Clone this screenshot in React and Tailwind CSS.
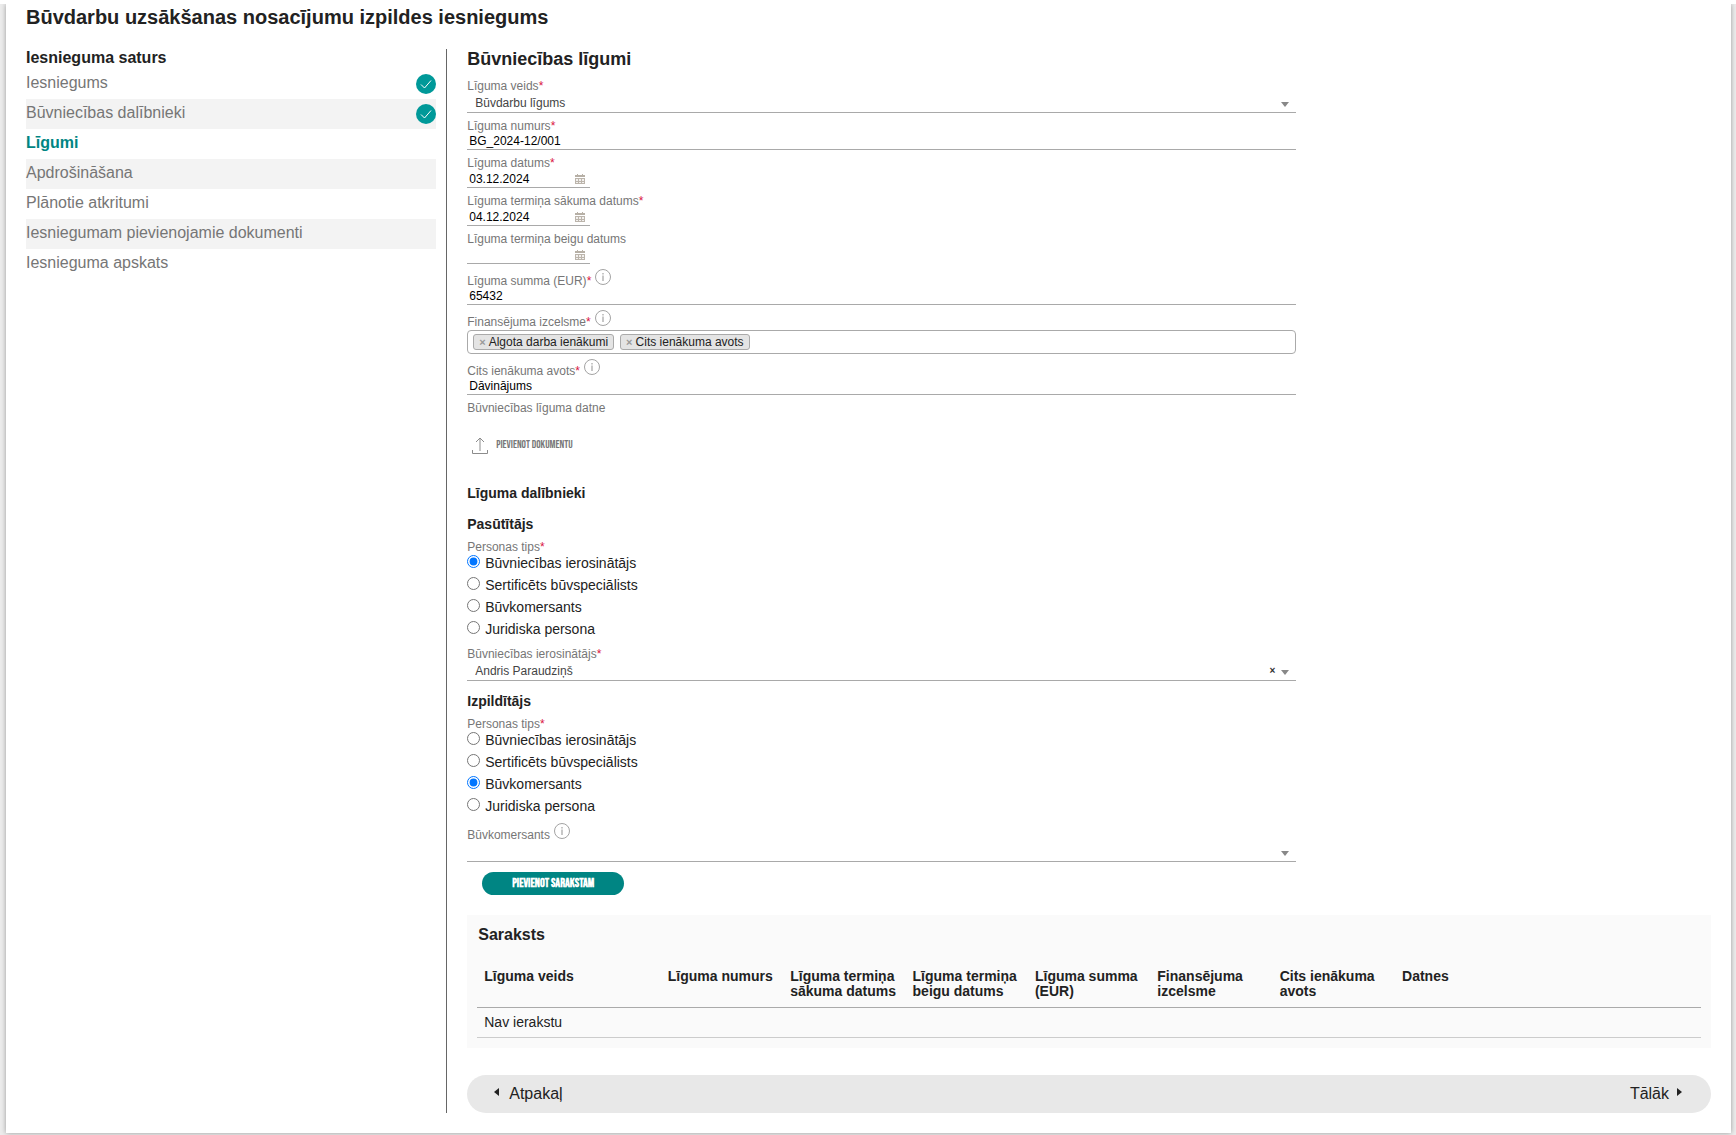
import { useState } from "react";

const steps = [
  { name: "Iesniegums", done: true },
  { name: "Būvniecības dalībnieki", done: true },
  { name: "Līgumi", active: true },
  { name: "Apdrošināšana" },
  { name: "Plānotie atkritumi" },
  { name: "Iesniegumam pievienojamie dokumenti" },
  { name: "Iesnieguma apskats" },
];

const personTypes = [
  "Būvniecības ierosinātājs",
  "Sertificēts būvspeciālists",
  "Būvkomersants",
  "Juridiska persona",
];

const columns = [
  { name: "Līguma veids", width: "w-[15%]" },
  { name: "Līguma numurs", width: "w-[10%]" },
  { name: "Līguma termiņa sākuma datums", width: "w-[10%]" },
  { name: "Līguma termiņa beigu datums", width: "w-[10%]" },
  { name: "Līguma summa (EUR)", width: "w-[10%]" },
  { name: "Finansējuma izcelsme", width: "w-[10%]" },
  { name: "Cits ienākuma avots", width: "w-[10%]" },
  { name: "Datnes", width: "w-[25%]" },
];

const CheckBadge = () => (
  <svg width="20" height="20" viewBox="0 0 20 20" fill="none">
    <circle cx="10" cy="10" r="10" fill="#009999" />
    <path d="M5 10.5 8.5 14 15 6.5" stroke="#fff" strokeWidth="1" />
  </svg>
);

const InfoIcon = () => (
  <svg width="16" height="16" viewBox="0 0 16 16" fill="none">
    <circle cx="8" cy="8" r="7.5" stroke="#a3a3a3" />
    <path d="M8 4v1.5M8 6.5V12" stroke="#b0b0b0" strokeWidth="1.4" />
  </svg>
);

const CalendarIcon = () => (
  <svg width="10" height="10" viewBox="0 0 10 10" fill="#a59c90">
    <path d="M2 0h1v1h4V0h1v1h2v2H0V1h2z" opacity=".8" />
    <path d="M0 4h10v6H0z" opacity=".75" />
    <path
      d="M1 5h2v2H1zM4 5h2v2H4zM7 5h2v2H7zM1 8h2v1H1zM4 8h2v1H4zM7 8h2v1H7z"
      fill="#fff"
      opacity=".8"
    />
  </svg>
);

const UploadIcon = () => (
  <svg width="16" height="17" viewBox="0 0 16 17" fill="none" stroke="#8c8c8c">
    <path d="M8 14V1M4 5l4-4 4 4M.5 13v3.5h15V13" strokeWidth="1" />
  </svg>
);

const Label = ({ id, text, required, hint }) => (
  <div className="flex items-end gap-1 text-xs leading-[14px] text-[#767676]">
    <label htmlFor={id}>
      {text}
      {required && <span className="text-[#d9163f]">*</span>}
    </label>
    {hint && (
      <button type="button" aria-label="Info" className="mb-[3px]">
        <InfoIcon />
      </button>
    )}
  </div>
);

const TextField = ({ id, label, value, hint }) => (
  <div className={hint ? "pt-[5px]" : "pt-[6px]"}>
    <Label id={id} text={label} required hint={hint} />
    <input
      id={id}
      type="text"
      defaultValue={value}
      className="block h-[17px] w-full border-b border-[#a9a9a9] px-[2px] text-xs text-black outline-none"
    />
  </div>
);

const DateField = ({ id, label, value, required }) => (
  <div className="pt-[6px]">
    <Label id={id} text={label} required={required} />
    <div className="flex h-[18px] w-[123px] items-center border-b border-[#a9a9a9] pr-[5px]">
      <input
        id={id}
        type="text"
        defaultValue={value}
        className="w-full min-w-0 px-[2px] text-xs leading-[14px] text-black outline-none"
      />
      <button type="button" aria-label="Kalendārs">
        <CalendarIcon />
      </button>
    </div>
  </div>
);

const SelectField = ({ id, label, value, required, hint, clearable }) => (
  <div className={hint ? "pt-[5px]" : "pt-[6px]"}>
    <Label id={id} text={label} required={required} hint={hint} />
    <div className="relative">
      <select
        id={id}
        className="block h-5 w-full appearance-none border-b border-[#a9a9a9] pl-2 text-xs text-[#444] outline-none"
      >
        <option>{value}</option>
      </select>
      <div className="pointer-events-none absolute inset-y-0 right-[7px] flex items-center gap-[6px]">
        {clearable && <span className="text-[10px] leading-[14px] font-bold text-[#333]">×</span>}
        <svg width="8" height="5" viewBox="0 0 8 5" className="mt-[3px]">
          <path d="M0 0h8L4 5z" fill="#888" />
        </svg>
      </div>
    </div>
  </div>
);

const Tag = ({ text }) => (
  <span className="flex h-4 items-center gap-[3px] rounded-[3px] border border-[#aaa] bg-[#e4e4e4] px-[5px] text-xs leading-[14px] text-[#222]">
    <button type="button" aria-label={"Noņemt " + text} className="text-[11px] font-bold text-[#999]">
      ×
    </button>
    {text}
  </span>
);

const PersonType = ({ name, initial }) => {
  const [type, setType] = useState(initial);

  return (
    <fieldset className="mt-2 -mb-px">
      <legend className="block text-xs leading-[14px] text-[#767676]">
        Personas tips<span className="text-[#d9163f]">*</span>
      </legend>
      {personTypes.map((item) => (
        <label key={item} className="flex h-[22px] items-start gap-[5px] pt-px text-sm leading-4">
          <input
            type="radio"
            name={name}
            checked={type === item}
            onChange={() => setType(item)}
            className="size-[13px]"
          />
          {item}
        </label>
      ))}
    </fieldset>
  );
};

const Sidebar = () => (
  <aside className="w-1/4 border-r border-[#666] pr-[10px]">
    <h2 className="text-base leading-[18px] font-bold">Iesnieguma saturs</h2>
    <nav className="mt-[2px]">
      {steps.map((step) => (
        <a
          key={step.name}
          href="#"
          className={
            "flex h-[30px] items-center justify-between even:bg-[#f3f3f3] " +
            (step.active ? "font-bold text-[#008583]" : "text-[#767676]")
          }
        >
          <span className="pb-[2px] leading-5">{step.name}</span>
          {step.done && <CheckBadge />}
        </a>
      ))}
    </nav>
  </aside>
);

const ContractList = () => (
  <section className="mt-5 bg-[#fafafa] px-[10px] py-[10px]">
    <h2 className="pl-px text-base leading-5 font-bold">Saraksts</h2>
    <table className="mt-4 w-full table-fixed text-left text-sm leading-[15px]">
      <thead>
        <tr className="border-b border-[#aaa] align-top">
          {columns.map((column) => (
            <th key={column.name} className={column.width + " px-[7px] py-2 font-bold"}>
              {column.name}
            </th>
          ))}
        </tr>
      </thead>
      <tbody>
        <tr className="border-b border-[#ccc]">
          <td colSpan={8} className="p-[7px]">
            Nav ierakstu
          </td>
        </tr>
      </tbody>
    </table>
  </section>
);

const Pager = () => (
  <div className="mt-[27px] flex h-[38px] items-center justify-between rounded-full bg-[#e8e8e8] pr-[29px] pl-[27px] text-base">
    <button type="button" className="flex items-center gap-[10px]">
      <svg width="5" height="8" viewBox="0 0 5 8" className="mb-1">
        <path d="M5 0v8L0 4z" fill="#222" />
      </svg>
      Atpakaļ
    </button>
    <button type="button" className="flex items-center gap-2">
      Tālāk
      <svg width="5" height="8" viewBox="0 0 5 8" className="mb-1">
        <path d="M0 0v8l5-4z" fill="#222" />
      </svg>
    </button>
  </div>
);

const App = () => {
  return (
    <div className="min-h-screen overflow-hidden border-t-4 border-white bg-[#ececec] pr-[5px] pb-[2px] pl-[6px] font-['Liberation_Sans',Arial,sans-serif] text-[#222]">
      <div className="bg-white px-5 pt-[2px] pb-5 shadow-[0_0_5px_rgba(0,0,0,0.35)]">
        <h1 className="text-xl leading-[23px] font-bold">
          Būvdarbu uzsākšanas nosacījumu izpildes iesniegums
        </h1>
        <div className="mt-5 flex">
          <Sidebar />
          <main className="min-w-0 flex-1 pl-5">
            <form className="w-2/3">
              <h2 className="mb-1 text-lg leading-5 font-bold">Būvniecības līgumi</h2>
              <SelectField id="type" label="Līguma veids" value="Būvdarbu līgums" required />
              <TextField id="number" label="Līguma numurs" value="BG_2024-12/001" />
              <DateField id="date" label="Līguma datums" value="03.12.2024" required />
              <DateField id="start" label="Līguma termiņa sākuma datums" value="04.12.2024" required />
              <DateField id="end" label="Līguma termiņa beigu datums" value="" />
              <TextField id="sum" label="Līguma summa (EUR)" value="65432" hint />
              <div className="pt-[5px]">
                <Label id="origin" text="Finansējuma izcelsme" required hint />
                <div className="mt-px flex h-6 items-center gap-[6px] rounded-[4px] border border-[#aaa] px-[5px]">
                  <Tag text="Algota darba ienākumi" />
                  <Tag text="Cits ienākuma avots" />
                  <input id="origin" type="text" className="min-w-0 flex-1 text-xs outline-none" />
                </div>
              </div>
              <TextField id="other" label="Cits ienākuma avots" value="Dāvinājums" hint />
              <p className="pt-[6px] text-xs leading-[14px] text-[#767676]">Būvniecības līguma datne</p>
              <button
                type="button"
                className="mt-[22px] ml-[5px] flex h-4 items-center gap-2 font-['Bebas_Neue',Roboto,sans-serif] text-[11px] text-[#777] uppercase"
              >
                <UploadIcon />
                Pievienot dokumentu
              </button>

              <h3 className="mt-8 text-sm leading-4 font-bold">Līguma dalībnieki</h3>
              <h3 className="mt-[15px] text-sm leading-4 font-bold">Pasūtītājs</h3>
              <PersonType name="customer" initial="Būvniecības ierosinātājs" />
              <SelectField
                id="initiator"
                label="Būvniecības ierosinātājs"
                value="Andris Paraudziņš"
                required
                clearable
              />
              <h3 className="mt-3 text-sm leading-4 font-bold">Izpildītājs</h3>
              <PersonType name="contractor" initial="Būvkomersants" />
              <SelectField id="merchant" label="Būvkomersants" value="" hint />
              <button
                type="button"
                className="mt-[10px] ml-[15px] block h-[23px] w-[142px] rounded-full bg-[#008583] text-center font-['Bebas_Neue',Roboto,sans-serif] text-xs font-bold text-white uppercase"
              >
                Pievienot sarakstam
              </button>
            </form>
            <ContractList />
            <Pager />
          </main>
        </div>
      </div>
    </div>
  );
};

export default App;
